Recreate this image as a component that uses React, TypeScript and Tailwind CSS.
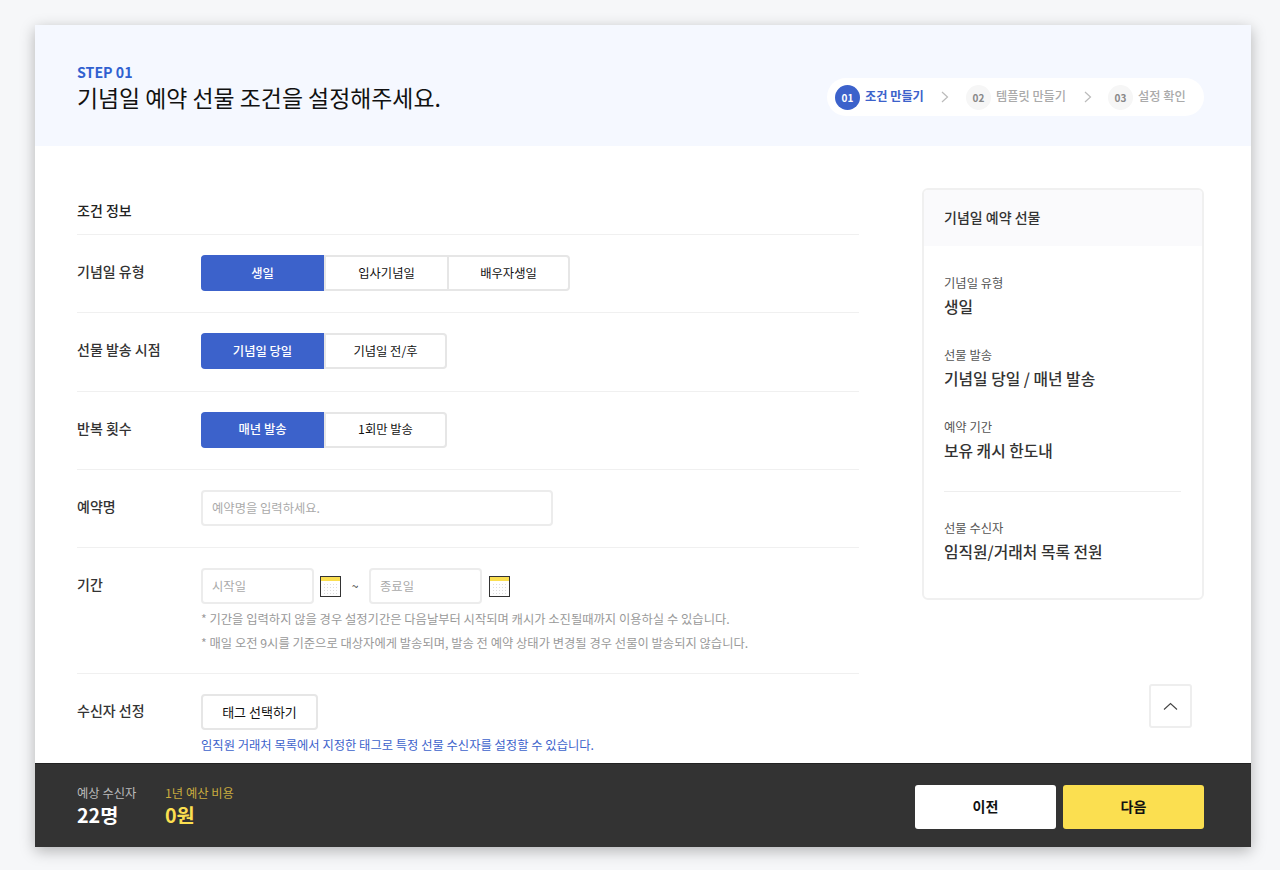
import React from 'react';

const FONT = 'font-["Noto_Sans_CJK_KR","Noto_Sans",sans-serif]';

const Calendar = () => (
  <svg width="21" height="21" viewBox="0 0 21 21" className="shrink-0">
    <rect x="0.5" y="0.5" width="20" height="20" fill="#fff" stroke="#333" />
    <rect x="1" y="1" width="19" height="4" fill="#fbdf50" />
    {[8, 11, 14, 17].map(y =>
      [4, 7, 10, 13, 16].map(x => <rect key={`${x}-${y}`} x={x} y={y} width="1" height="1" fill="#ddd" />)
    )}
  </svg>
);

const Chevron = () => (
  <svg width="8" height="12" viewBox="0 0 8 12" fill="none" stroke="#bbb" strokeWidth="1.2" className="shrink-0">
    <path d="M1 1l5.5 5L1 11" />
  </svg>
);

const Segmented = ({ items }: { items: string[] }) => (
  <div className="flex">
    {items.map((t, i) => (
      <button
        key={t}
        className={
          'w-[123px] h-9 text-[12.3px] border-y-2 ' +
          (i === 0
            ? 'bg-[#3c62cb] border-[#3c62cb] text-white rounded-l-[4px] font-medium'
            : 'bg-white border-[#e6e6e6] border-l-2 text-[#111] ') +
          (i === items.length - 1 ? 'border-r-2 rounded-r-[4px]' : '')
        }
      >
        {t}
      </button>
    ))}
  </div>
);

const Row = ({ label, children, className }: { label: string; children: React.ReactNode; className?: string }) => (
  <div className={'flex border-b border-[#f0f0f0] pt-[20px] ' + (className || 'h-[78.25px]')}>
    <div className="w-[124px] shrink-0 text-sm leading-9 text-[#333] font-medium -mt-[2px]">{label}</div>
    <div>{children}</div>
  </div>
);

const Summary = ({ label, value }: { label: string; value: string }) => (
  <div className="h-[72px]">
    <div className="text-[12.3px] leading-[18px] text-[#555]">{label}</div>
    <div className="text-[15.8px] leading-[24px] mt-[3px] text-[#333] font-medium">{value}</div>
  </div>
);

const DateBox = ({ text }: { text: string }) => (
  <div className="w-[113px] h-9 border-2 border-[#ececec] rounded-[4px] pl-[9px] text-[12.3px] leading-8 text-[#aaa]">{text}</div>
);

const App: React.FC = () => {
  return (
    <div className={FONT + ' min-h-screen bg-[#f6f7f9] pt-[25px] pl-[35px] overflow-hidden'}>
      <div className="w-[1216px] h-[822px] flex flex-col bg-white shadow-[0_4px_14px_rgba(0,0,0,0.28)] relative">
        <header className="h-[121px] shrink-0 bg-[#f5f8ff] flex justify-between pl-[42px] pr-[47px]">
          <div className="pt-[38px]">
            <div className="text-[14.2px] leading-[18px] font-bold text-[#3060d0]">STEP 01</div>
            <h1 className="text-[22.9px] leading-[32px] font-normal text-[#111]">기념일 예약 선물 조건을 설정해주세요.</h1>
          </div>
          <div className="mt-[53px] h-[38px] w-[377px] bg-white rounded-full flex items-center pl-2 text-[12.2px] font-medium text-[#aaa]">
            <span className="w-[25px] h-[25px] rounded-full bg-[#3c62cb] text-white text-[10px] font-bold flex items-center justify-center">01</span>
            <span className="ml-[5px] -mt-[2px] w-[59px] text-[#3c62cb] font-bold whitespace-nowrap">조건 만들기</span>
            <span className="ml-[17px]"><Chevron /></span>
            <span className="ml-[17px] w-[25px] h-[25px] rounded-full bg-[#f6f6f6] text-[#888] text-[10px] font-bold flex items-center justify-center">02</span>
            <span className="ml-[5px] -mt-[2px] w-[70px] whitespace-nowrap">템플릿 만들기</span>
            <span className="ml-[18px]"><Chevron /></span>
            <span className="ml-[16px] w-[25px] h-[25px] rounded-full bg-[#f6f6f6] text-[#888] text-[10px] font-bold flex items-center justify-center">03</span>
            <span className="ml-[5px] -mt-[2px] whitespace-nowrap">설정 확인</span>
          </div>
        </header>

        <main className="flex-1 min-h-0 overflow-hidden flex pl-[42px] pr-[47px]">
          <section className="w-[782px] shrink-0 pt-[54px]">
            <h2 className="text-sm leading-[20px] font-medium text-[#222] h-[34px] border-b border-[#f0f0f0] box-content">조건 정보</h2>
            <Row label="기념일 유형"><Segmented items={['생일', '입사기념일', '배우자생일']} /></Row>
            <Row label="선물 발송 시점"><Segmented items={['기념일 당일', '기념일 전/후']} /></Row>
            <Row label="반복 횟수"><Segmented items={['매년 발송', '1회만 발송']} /></Row>
            <Row label="예약명">
              <div className="w-[352px] h-9 border-2 border-[#ececec] rounded-[4px] pl-[9px] text-[12.3px] leading-8 text-[#aaa]">예약명을 입력하세요.</div>
            </Row>
            <Row label="기간" className="h-[126px]">
              <div className="flex items-center">
                <DateBox text="시작일" />
                <span className="ml-[6px]"><Calendar /></span>
                <span className="w-[28px] text-center text-xs text-[#333]">~</span>
                <DateBox text="종료일" />
                <span className="ml-[7px]"><Calendar /></span>
              </div>
              <p className="mt-[3px] text-[12.3px] leading-6 text-[#999]">* 기간을 입력하지 않을 경우 설정기간은 다음날부터 시작되며 캐시가 소진될때까지 이용하실 수 있습니다.</p>
              <p className="text-[12.3px] leading-6 text-[#999]">* 매일 오전 9시를 기준으로 대상자에게 발송되며, 발송 전 예약 상태가 변경될 경우 선물이 발송되지 않습니다.</p>
            </Row>
            <Row label="수신자 선정" className="h-[110px] border-b-0">
              <button className="w-[117px] h-9 border-2 border-[#e6e6e6] rounded-[4px] bg-white text-[13px] text-[#111]">태그 선택하기</button>
              <p className="mt-[6px] text-[12.3px] leading-[18px] text-[#3c62cb]">임직원 거래처 목록에서 지정한 태그로 특정 선물 수신자를 설정할 수 있습니다.</p>
            </Row>
          </section>

          <aside className="ml-[63px] mt-[42px] w-[282px] h-[412px] border-2 border-[#f0f0f0] rounded-[6px] overflow-hidden">
            <div className="h-[56px] bg-[#fafafc] pl-[20px] text-sm font-medium leading-[54px] text-[#333]">기념일 예약 선물</div>
            <div className="pl-[20px] pr-[21px] pt-[28px]">
              <Summary label="기념일 유형" value="생일" />
              <Summary label="선물 발송" value="기념일 당일 / 매년 발송" />
              <Summary label="예약 기간" value="보유 캐시 한도내" />
              <div className="border-t border-[#eeeeee] mt-px mb-[27px]" />
              <Summary label="선물 수신자" value="임직원/거래처 목록 전원" />
            </div>
          </aside>
        </main>

        <button className="absolute left-[1114px] top-[659px] w-[43px] h-[44px] bg-white border-2 border-[#eeeeee] rounded-[3px] flex items-center justify-center">
          <svg width="15" height="9" viewBox="0 0 15 9" fill="none" stroke="#444" strokeWidth="1.1"><path d="M1 7.5L7.5 1.5 14 7.5" /></svg>
        </button>

        <footer className="h-[84px] shrink-0 bg-[#333333] border-t border-[#222] flex justify-between items-start pl-[42px] pr-[47px]">
          <div className="flex pt-[20px]">
            <div className="w-[88px]">
              <div className="text-[12.3px] leading-[18px] text-[#bbb]">예상 수신자</div>
              <div className="-mt-px text-[19.7px] leading-[28px] font-bold text-white">22명</div>
            </div>
            <div>
              <div className="text-[12.3px] leading-[18px] text-[#c9ab3f]">1년 예산 비용</div>
              <div className="-mt-px text-[19.7px] leading-[28px] font-bold text-[#fbdf50]">0원</div>
            </div>
          </div>
          <div className="flex gap-[7px] pt-[21px]">
            <button className="w-[141px] h-11 pb-[2px] bg-white rounded-[3px] text-sm font-bold text-[#111]">이전</button>
            <button className="w-[141px] h-11 pb-[2px] bg-[#fbdf50] rounded-[3px] text-sm font-bold text-[#111]">다음</button>
          </div>
        </footer>
      </div>
    </div>
  );
};

export default App;
